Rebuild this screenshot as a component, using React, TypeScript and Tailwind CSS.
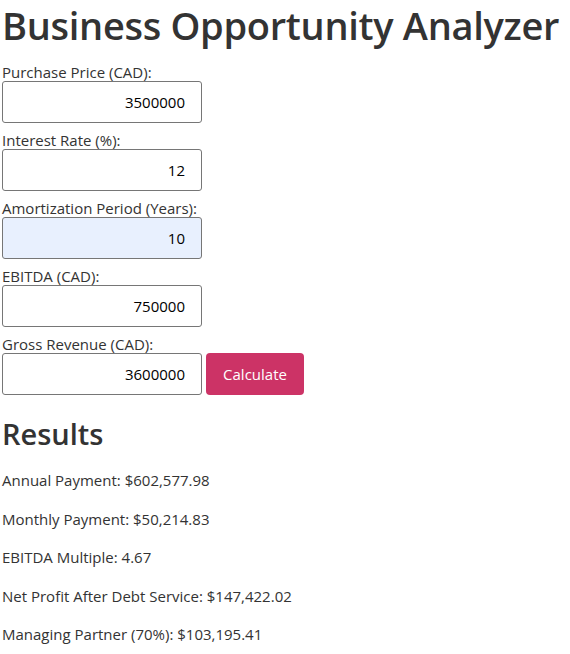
import { useState } from 'react';

type Field = { key: string; label: string };

const fields: Field[] = [
    { key: 'price', label: 'Purchase Price (CAD):' },
    { key: 'rate', label: 'Interest Rate (%):' },
    { key: 'years', label: 'Amortization Period (Years):' },
    { key: 'ebitda', label: 'EBITDA (CAD):' },
    { key: 'revenue', label: 'Gross Revenue (CAD):' },
];

const money = (n: number) =>
    '$' + n.toLocaleString('en-US', { minimumFractionDigits: 2, maximumFractionDigits: 2 });

function analyze(v: Record<string, string>) {
    const price = Number(v.price);
    const r = Number(v.rate) / 100 / 12;
    const n = Number(v.years) * 12;
    const ebitda = Number(v.ebitda);
    const monthly = r === 0 ? price / n : (price * r) / (1 - Math.pow(1 + r, -n));
    const annual = monthly * 12;
    const net = ebitda - annual;
    return [
        `Annual Payment: ${money(annual)}`,
        `Monthly Payment: ${money(monthly)}`,
        `EBITDA Multiple: ${(price / ebitda).toFixed(2)}`,
        `Net Profit After Debt Service: ${money(net)}`,
        `Managing Partner (70%): ${money(net * 0.7)}`,
    ];
}

export default function App() {
    const [values, setValues] = useState<Record<string, string>>({
        price: '3500000',
        rate: '12',
        years: '10',
        ebitda: '750000',
        revenue: '3600000',
    });
    const [results, setResults] = useState<string[]>(() => analyze(values));

    return (
        <div className="px-[2px] text-[#333] font-['Open_Sans',sans-serif] bg-white min-h-screen">
            <h1 className="text-[38px] font-semibold leading-[50px] mb-[14px] tracking-[-0.3px] whitespace-nowrap">
                Business Opportunity Analyzer
            </h1>

            {fields.map((f, i) => (
                <div key={f.key} className={i < fields.length - 1 ? 'mb-[9px]' : ''}>
                    <label className="block text-[15px] leading-[17px]">{f.label}</label>
                    <div className="flex gap-1">
                        <input
                            type="text"
                            inputMode="numeric"
                            value={values[f.key]}
                            onChange={(e) => setValues({ ...values, [f.key]: e.target.value })}
                            className={`w-[200px] h-[42px] border border-[#767676] rounded-[3px] text-right pr-4 text-[15px] text-black outline-none ${
                                f.key === 'years' ? 'bg-[#e8f0fe]' : 'bg-white'
                            }`}
                        />
                        {f.key === 'revenue' && (
                            <button
                                onClick={() => setResults(analyze(values))}
                                className="w-[98px] h-[42px] rounded-[4px] bg-[#cc3366] text-white text-[15px]"
                            >
                                Calculate
                            </button>
                        )}
                    </div>
                </div>
            ))}

            <h2 className="text-[29px] font-semibold leading-[38px] mt-5 mb-4">Results</h2>
            {results.map((line) => (
                <p key={line} className="text-[15px] leading-[22.5px] mb-4">
                    {line}
                </p>
            ))}
        </div>
    );
}
